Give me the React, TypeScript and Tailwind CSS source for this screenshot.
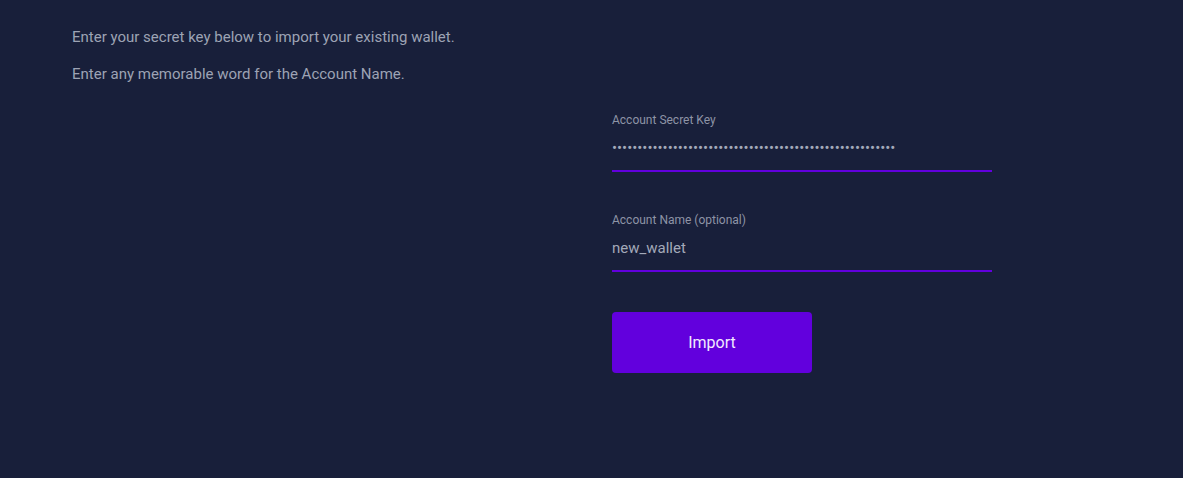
import React from 'react'

const secret = 'SDJ4K2WQ7NXP3L8ZRTV5YHB6MC9FGAE1UOIKDS2W3Q4R5T6Y7U8I9OPQ'

const Field = ({ label, value, type }: { label: string; value: string; type?: string }) => {
	return (
		<div className="flex flex-col">
			<label className="text-[12px] leading-[16px] text-[#8e94a6]">{label}</label>
			<input
				readOnly
				type={type || 'text'}
				value={value}
				className="mt-[10px] h-[34px] bg-transparent text-[15px] text-[#a3a9b9] outline-none border-b-2 border-[#6200dd] pb-[12px]"
			/>
		</div>
	)
}

const App = () => {
	return (
		<div className="min-h-[478px] w-full bg-[#181f3a] font-['Roboto',sans-serif]">
			<div className="px-[72px] pt-[27px]">
				<p className="text-[15px] leading-[20px] text-[#9da3b4]">Enter your secret key below to import your existing wallet.</p>
				<p className="mt-[17px] text-[15px] leading-[20px] text-[#9da3b4]">Enter any memorable word for the Account Name.</p>

				<div className="ml-[540px] mt-[28px] flex w-[380px] flex-col">
					<Field label="Account Secret Key" value={secret} type="password" />
					<div className="mt-[40px]">
						<Field label="Account Name (optional)" value="new_wallet" />
					</div>
					<button className="mt-[40px] h-[61px] w-[200px] rounded-[4px] bg-[#6200dd] text-[16px] text-[#f1eafd]">
						Import
					</button>
				</div>
			</div>
		</div>
	)
}

export default App
